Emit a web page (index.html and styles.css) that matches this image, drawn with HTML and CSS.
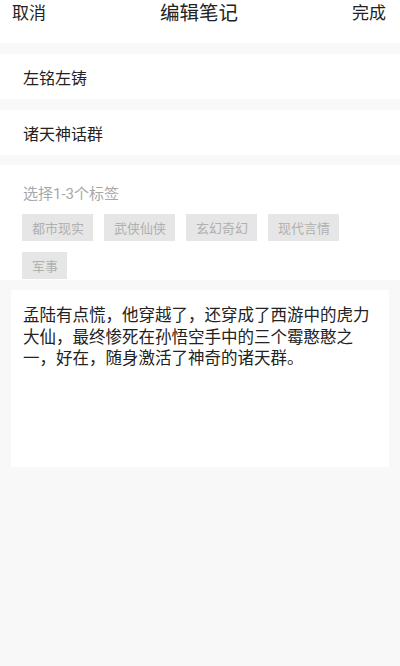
FILE: index.html
```html
<!DOCTYPE html>
<html lang="zh-CN">
<head>
    <meta charset="UTF-8">
    <meta name="viewport" content="width=device-width, initial-scale=1.0">
    <title>编辑笔记</title>
    <link rel="stylesheet" href="styles.css">
</head>
<body>

    <div class="header">
        <span class="header-btn">取消</span>
        <span class="header-title">编辑笔记</span>
        <span class="header-btn">完成</span>
    </div>

    <div class="field">左铭左铸</div>
    <div class="field">诸天神话群</div>

    <!-- Tag picker -->
    <div class="tags">
        <div class="tags-label">选择1-3个标签</div>
        <div class="tag-list">
            <span class="tag">都市现实</span>
            <span class="tag">武侠仙侠</span>
            <span class="tag">玄幻奇幻</span>
            <span class="tag">现代言情</span>
            <span class="tag">军事</span>
        </div>
    </div>

    <div class="note">孟陆有点慌，他穿越了，还穿成了西游中的虎力大仙，最终惨死在孙悟空手中的三个霉憨憨之一，好在，随身激活了神奇的诸天群。</div>

</body>
</html>
```

FILE: styles.css
```css
body {
    margin: 0;
    padding: 0;
    font-family: "Noto Sans CJK SC", "Noto Sans", sans-serif;
    background-color: #f8f8f8;
    color: #222;
    min-height: 100vh;
}

.header {
    background-color: #fff;
    height: 43px;
    display: flex;
    justify-content: space-between;
    align-items: flex-start;
    padding: 0 14px 0 12px;
    margin-bottom: 11px;
}

.header-btn {
    font-size: 17px;
    line-height: 23px;
}

.header-title {
    font-size: 19.5px;
    line-height: 23px;
}

.field {
    background-color: #fff;
    height: 45px;
    display: flex;
    align-items: center;
    padding: 0 23px;
    font-size: 16px;
    margin-bottom: 11px;
}

.field + .field {
    margin-bottom: 10px;
}

.tags {
    background-color: #fff;
    padding: 19px 22px 1px;
}

.tags-label {
    font-family: Roboto, "Noto Sans CJK SC", sans-serif;
    font-size: 15px;
    line-height: 20px;
    color: #a8a8a8;
    padding-left: 1px;
    margin-bottom: 10px;
}

.tag-list {
    display: flex;
    flex-wrap: wrap;
    gap: 11px;
}

.tag {
    background-color: #e6e6e6;
    color: #b0b0b0;
    font-size: 13px;
    height: 27px;
    line-height: 27px;
    padding: 0 9px 0 10px;
}

.note {
    background-color: #fff;
    margin: 10px 11px 0;
    height: 151px;
    padding: 14px 12px 12px;
    font-size: 16.5px;
    line-height: 21.5px;
    color: #222;
}
```
